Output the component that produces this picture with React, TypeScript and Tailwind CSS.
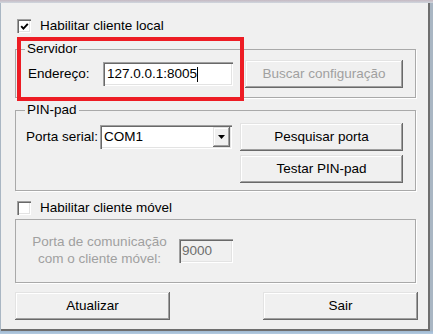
import React from "react";

const raised =
  "shadow-[inset_-1px_-1px_0_#696969,inset_1px_1px_0_#e3e3e3,inset_-2px_-2px_0_#a0a0a0,inset_2px_2px_0_#ffffff]";
const sunken =
  "shadow-[inset_1px_1px_0_#a0a0a0,inset_2px_2px_0_#696969,inset_-1px_-1px_0_#ffffff,inset_-2px_-2px_0_#e3e3e3]";

function Btn({
  children,
  className,
  disabled,
}: {
  children: React.ReactNode;
  className: string;
  disabled?: boolean;
}) {
  return (
    <div
      className={`flex items-center justify-center bg-[#f0f0f0] ${raised} ${
        disabled ? "text-[#a0a0a0]" : "text-black"
      } ${className}`}
    >
      {children}
    </div>
  );
}

function Check({ checked }: { checked?: boolean }) {
  return (
    <div
      className={`w-[14px] h-[14px] bg-white flex items-center justify-center ${sunken}`}
    >
      {checked && (
        <svg width="9" height="9" viewBox="0 0 9 9">
          <polyline
            points="1.2,4.2 3.4,6.6 7.8,1.8"
            fill="none"
            stroke="#000"
            strokeWidth="1.9"
          />
        </svg>
      )}
    </div>
  );
}

export default function App() {
  return (
    <div className="w-[433px] h-[334px] flex flex-col bg-[#afc5d9] font-['Liberation_Sans',Arial,sans-serif] text-[13.5px] leading-[16px] text-black overflow-hidden">
      <div className="h-[3px] bg-gradient-to-b from-[#c6b9c2] to-[#cfd6de]" />
      <div className="flex bg-[#a9b6c3] pl-[1px]">
        <div className="relative w-[429px] h-[328px] bg-[#f0f0f0] border-r-2 border-b-2 border-[#6e6e6e] pl-[14px] flex flex-col">
          {/* Habilitar cliente local */}
          <div className="mt-[16px] h-[14px] flex items-center pl-[2px]">
            <Check checked />
            <span className="ml-[9px]">Habilitar cliente local</span>
          </div>

          {/* Servidor */}
          <fieldset className="mt-[8px] w-[401px] h-[57px] border border-[#a9a9a9] shadow-[1px_1px_0_#ffffff]">
            <legend className="ml-[9px] px-[2px] leading-[16px]">Servidor</legend>
            <div className="mt-[3px] h-[28px] flex items-center pl-[12px]">
              <span className="w-[75px]">Endereço:</span>
              <div
                className={`w-[130px] h-[24px] bg-white flex items-center pl-[4px] ${sunken}`}
              >
                <span>127.0.0.1:8005</span>
                <span className="inline-block w-[1px] h-[15px] bg-black" />
              </div>
              <Btn disabled className="ml-[12px] w-[158px] h-[28px]">
                Buscar configuração
              </Btn>
            </div>
          </fieldset>

          {/* PIN-pad */}
          <fieldset className="mt-[4px] w-[401px] h-[89px] border border-[#a9a9a9] shadow-[1px_1px_0_#ffffff]">
            <legend className="ml-[9px] px-[2px] leading-[16px]">PIN-pad</legend>
            <div className="mt-[5px] flex pl-[10px]">
              <div className="h-[28px] flex items-center">
                <span className="w-[74px]">Porta serial:</span>
                <div
                  className={`w-[132px] h-[24px] bg-white flex items-center justify-between ${sunken}`}
                >
                  <span className="pl-[4px]">COM1</span>
                  <div
                    className={`mr-[2px] w-[17px] h-[20px] bg-[#f0f0f0] flex items-center justify-center ${raised}`}
                  >
                    <svg width="7" height="4" viewBox="0 0 7 4">
                      <polygon points="0,0 7,0 3.5,4" fill="#000" />
                    </svg>
                  </div>
                </div>
              </div>
              <div className="ml-[8px] flex flex-col gap-[4px]">
                <Btn className="w-[163px] h-[28px]">Pesquisar porta</Btn>
                <Btn className="w-[163px] h-[28px]">Testar PIN-pad</Btn>
              </div>
            </div>
          </fieldset>

          {/* Habilitar cliente móvel */}
          <div className="mt-[10px] h-[14px] flex items-center pl-[2px]">
            <Check />
            <span className="ml-[9px]">Habilitar cliente móvel</span>
          </div>

          <div className="mt-[4px] w-[401px] h-[64px] border border-[#a9a9a9] shadow-[1px_1px_0_#ffffff] flex items-center">
            <div className="ml-[14px] w-[139px] text-center text-[#a0a0a0] leading-[17px] mb-[2px]">
              <div>Porta de comunicação</div>
              <div>com o cliente móvel:</div>
            </div>
            <div
              className={`ml-[10px] w-[54px] h-[24px] bg-[#f0f0f0] flex items-center pl-[3px] text-[#6d6d6d] ${sunken}`}
            >
              9000
            </div>
          </div>

          <div className="mt-[9px] w-[403px] flex justify-between">
            <Btn className="w-[155px] h-[28px]">Atualizar</Btn>
            <Btn className="w-[155px] h-[28px]">Sair</Btn>
          </div>

          {/* red highlight annotation */}
          <div className="absolute left-[16px] top-[34px] w-[227px] h-[64px] border-4 border-[#ed1c24]" />
        </div>
      </div>
      <div className="flex-1 bg-gradient-to-b from-[#9fb9d2] to-[#b5cbe0]" />
    </div>
  );
}
